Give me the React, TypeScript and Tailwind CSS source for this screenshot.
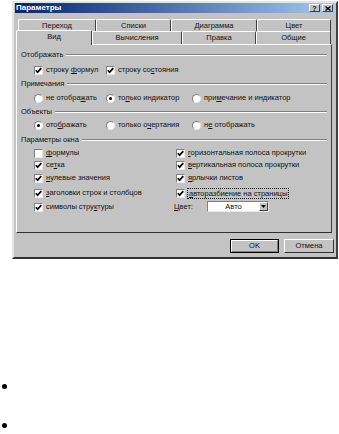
import { ReactNode } from "react"

// Окно «Параметры» в стиле Windows classic

function U({ children }: { children: ReactNode }) {
	return <span className="underline underline-offset-1">{children}</span>
}

function Check({ checked = true }: { checked?: boolean }) {
	return (
		<span className="inline-flex w-[9px] h-[9px] shrink-0 items-center justify-center bg-white border border-t-[#808080] border-l-[#808080] border-b-[#e8e8e8] border-r-[#e8e8e8]">
			{checked && (
				<svg width="7" height="7" viewBox="0 0 7 7">
					<path d="M0.8 3.2 L2.6 5.2 L6.3 1.2" stroke="#000" strokeWidth="1.7" fill="none" />
				</svg>
			)}
		</span>
	)
}

function Radio({ checked = false }: { checked?: boolean }) {
	return (
		<span className="inline-flex w-[9px] h-[9px] shrink-0 items-center justify-center rounded-full bg-white border border-t-[#808080] border-l-[#808080] border-b-[#e8e8e8] border-r-[#e8e8e8]">
			{checked && <span className="w-[3px] h-[3px] rounded-full bg-black" />}
		</span>
	)
}

function GroupTitle({ title, className = "" }: { title: string; className?: string }) {
	return (
		<div className={`flex items-center h-[10px] pl-[4px] pr-[4px] ${className}`}>
			<span>{title}</span>
			<div className="flex-1 ml-[3px] h-[2px] border-t border-t-[#808080] border-b border-b-white" />
		</div>
	)
}

function Item({ children, className = "" }: { children: ReactNode; className?: string }) {
	return <div className={`flex items-center gap-[3px] h-[10px] ${className}`}>{children}</div>
}

const backTabs = [
	{ id: "perehod", title: "Переход", w: "w-[78px]" },
	{ id: "spiski", title: "Списки", w: "w-[75px]" },
	{ id: "diagramma", title: "Диаграмма", w: "w-[86px]" },
	{ id: "cvet", title: "Цвет", w: "w-[74px]" },
]

const frontTabs = [
	{ id: "vid", title: "Вид", w: "w-[76px]", active: true },
	{ id: "vychisleniya", title: "Вычисления", w: "w-[90px]", active: false },
	{ id: "pravka", title: "Правка", w: "w-[74px]", active: false },
	{ id: "obshchie", title: "Общие", w: "w-[75px]", active: false },
]

function ParamsDialog() {
	return (
		<div className="ml-[12px] mt-[1px] w-[326px] bg-[#c3c3c3] border-2 border-t-[#e4e4e4] border-l-[#e4e4e4] border-b-[#303030] border-r-[#404040] pb-[4px] px-[1px]">
			{/* Заголовок окна */}
			<div className="flex items-center h-[10px] bg-gradient-to-r from-[#0a246a] to-[#a6caf0] pl-[1px] pr-[2px]">
				<span className="flex-1 text-white font-bold text-[8px] leading-none">Параметры</span>
				<div className="flex gap-[2px]">
					<div className="w-[11px] h-[8px] bg-[#c3c3c3] border border-t-white border-l-white border-b-[#404040] border-r-[#404040] flex items-center justify-center text-[7px] font-bold leading-none">
						?
					</div>
					<div className="w-[11px] h-[8px] bg-[#c3c3c3] border border-t-white border-l-white border-b-[#404040] border-r-[#404040] flex items-center justify-center">
						<svg width="6" height="5" viewBox="0 0 6 5">
							<path d="M0.5 0.5 L5.5 4.5 M5.5 0.5 L0.5 4.5" stroke="#000" strokeWidth="1.3" />
						</svg>
					</div>
				</div>
			</div>

			{/* Вкладки */}
			<div className="flex mt-[6px] ml-[3px] h-[12px]">
				{backTabs.map((t) => (
					<div
						key={t.id}
						className={`${t.w} h-[13px] flex justify-center pt-[1px] border-t border-l border-t-white border-l-white border-r border-r-[#404040] rounded-t-[2px] leading-[10px]`}
					>
						{t.title}
					</div>
				))}
			</div>
			<div className="flex ml-[1px] h-[13px]">
				{frontTabs.map((t) => (
					<div
						key={t.id}
						className={`${t.w} flex justify-center border-t border-l border-t-white border-l-white border-r border-r-[#404040] rounded-t-[2px] bg-[#c3c3c3] leading-[10px] pt-[1px] ${
							t.active ? "relative z-10 h-[15px] -mt-[1px]" : "h-[13px]"
						}`}
					>
						{t.title}
					</div>
				))}
			</div>

			{/* Панель «Вид» */}
			<div className="ml-[1px] w-[316px] h-[189px] border border-t-white border-l-white border-b-[#303030] border-r-[#404040]">
				<GroupTitle title="Отображать" className="mt-[5px]" />
				<div className="flex pl-[17px] mt-[5px]">
					<Item className="w-[72px]">
						<Check />
						<span>
							строку <U>ф</U>ормул
						</span>
					</Item>
					<Item>
						<Check />
						<span>
							строку со<U>с</U>тояния
						</span>
					</Item>
				</div>

				<GroupTitle title="Примечания" className="mt-[4px]" />
				<div className="flex pl-[17px] mt-[4px]">
					<Item className="w-[72px]">
						<Radio />
						<span>
							не отобра<U>ж</U>ать
						</span>
					</Item>
					<Item className="w-[86px]">
						<Radio checked />
						<span>
							то<U>л</U>ько индикатор
						</span>
					</Item>
					<Item>
						<Radio />
						<span>
							при<U>м</U>ечание и индикатор
						</span>
					</Item>
				</div>

				<GroupTitle title="Объекты" className="mt-[4px]" />
				<div className="flex pl-[17px] mt-[3px]">
					<Item className="w-[72px]">
						<Radio checked />
						<span>
							ото<U>б</U>ражать
						</span>
					</Item>
					<Item className="w-[86px]">
						<Radio />
						<span>
							только о<U>ч</U>ертания
						</span>
					</Item>
					<Item>
						<Radio />
						<span>
							н<U>е</U> отображать
						</span>
					</Item>
				</div>

				<GroupTitle title="Параметры окна" className="mt-[5px]" />
				<div className="flex pl-[17px]">
					<div className="w-[142px] flex flex-col">
						<Item className="mt-[3px]">
							<Check checked={false} />
							<span>
								<U>ф</U>ормулы
							</span>
						</Item>
						<Item className="mt-[2px]">
							<Check />
							<span>
								се<U>т</U>ка
							</span>
						</Item>
						<Item className="mt-[3px]">
							<Check />
							<span>
								<U>н</U>улевые значения
							</span>
						</Item>
						<Item className="mt-[5px]">
							<Check />
							<span>
								<U>з</U>аголовки строк и столбцов
							</span>
						</Item>
						<Item className="mt-[4px]">
							<Check />
							<span>
								символы стру<U>к</U>туры
							</span>
						</Item>
					</div>
					<div className="flex flex-col">
						<Item className="mt-[3px]">
							<Check />
							<span>
								<U>г</U>оризонтальная полоса прокрутки
							</span>
						</Item>
						<Item className="mt-[2px]">
							<Check />
							<span>
								<U>в</U>ертикальная полоса прокрутки
							</span>
						</Item>
						<Item className="mt-[3px]">
							<Check />
							<span>
								<U>я</U>рлычки листов
							</span>
						</Item>
						<Item className="mt-[5px]">
							<Check />
							<span className="outline outline-1 outline-dotted outline-black px-[1px] leading-[9px]">
								<U>а</U>вторазбиение на страницы
							</span>
						</Item>
						<div className="flex items-center h-[11px] mt-[3px] -ml-[2px]">
							<span className="w-[33px]">
								<U>Ц</U>вет:
							</span>
							<div className="w-[62px] h-[11px] flex bg-white border border-t-[#808080] border-l-[#808080] border-b-[#e8e8e8] border-r-[#e8e8e8]">
								<span className="flex-1 text-center leading-[9px]">Авто</span>
								<div className="w-[9px] h-[9px] bg-[#c3c3c3] border border-t-white border-l-white border-b-[#404040] border-r-[#404040] flex items-center justify-center">
									<svg width="5" height="3" viewBox="0 0 5 3">
										<path d="M0 0 L5 0 L2.5 3 Z" fill="#000" />
									</svg>
								</div>
							</div>
						</div>
					</div>
				</div>
			</div>

			{/* Кнопки */}
			<div className="flex justify-end gap-[5px] mt-[6px] pr-[1px]">
				<div className="w-[49px] h-[14px] border border-black">
					<div className="h-full flex items-center justify-center border border-t-white border-l-white border-b-[#808080] border-r-[#808080]">
						OK
					</div>
				</div>
				<div className="w-[50px] h-[14px] flex items-center justify-center border border-t-white border-l-white border-b-[#303030] border-r-[#303030]">
					Отмена
				</div>
			</div>
		</div>
	)
}

export default function App() {
	return (
		<div className="w-[339px] h-[434px] bg-white overflow-hidden font-['Liberation_Sans',Arial,sans-serif] text-[7.5px] text-[#111]">
			<ParamsDialog />
			{/* Маркеры списка под окном */}
			<div className="ml-[2px] mt-[125px] w-[5px] h-[5px] rounded-full bg-black" />
			<div className="ml-[2px] mt-[34px] w-[5px] h-[5px] rounded-full bg-black" />
		</div>
	)
}
